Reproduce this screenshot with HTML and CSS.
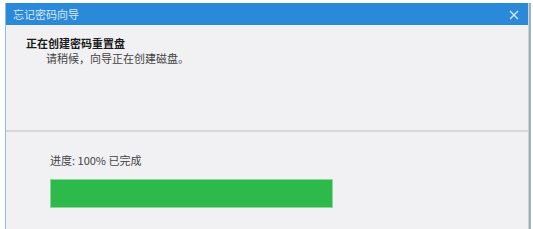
FILE: index.html
```html
<!DOCTYPE html>
<html>
    <head>
        <title>忘记密码向导</title>
        <link rel="stylesheet" href="styles.css">
    </head>
<body>
    <div class="window">
        <div class="titlebar">
            <span class="title">忘记密码向导</span>
            <svg class="close" width="10" height="10" viewBox="0 0 10 10">
                <path d="M1 1 L9 9 M9 1 L1 9" stroke="#d4e6f6" stroke-width="1.4" fill="none"/>
            </svg>
        </div>
        <div class="header">
            <div class="heading">正在创建密码重置盘</div>
            <div class="subtext">请稍候，向导正在创建磁盘。</div>
        </div>
        <div class="content">
            <div class="progress-label">进度: 100% 已完成</div>
            <div class="progress">
                <div class="progress-fill" style="width: 100%"></div>
            </div>
        </div>
    </div>
</body>
</html>
```

FILE: styles.css
```css
body {
    margin: 0;
    background-color: #fff;
    font-family: "Noto Sans CJK SC", "Noto Sans", sans-serif;
    overflow: hidden;
}

.window {
    margin: 3px 0 0 5px;
    width: 522px;
    height: 226px;
    background-color: #f1f0f3;
    border-left: 1px solid #8dbde6;
    border-right: 1px solid #b9d5ea;
    box-shadow: 2px 0 0 #a7adb3;
}

.titlebar {
    height: 22px;
    background-color: #2b89d9;
    display: flex;
    align-items: center;
    justify-content: space-between;
    padding: 0 9px 0 7px;
}

.title {
    font-size: 11px;
    color: #d9e9f8;
}

.close {
    margin-top: 1px;
}

.header {
    height: 94px;
    padding: 11px 0 0 20px;
    border-bottom: 2px solid #d7d7da;
}

.heading {
    font-size: 11px;
    line-height: 15px;
    font-weight: bold;
    color: #1a1a1a;
}

.subtext {
    font-size: 11px;
    line-height: 14px;
    color: #444;
    padding-left: 20px;
}

.content {
    padding: 21px 0 0 44px;
}

.progress-label {
    font-size: 11px;
    line-height: 15px;
    color: #444;
}

.progress {
    margin-top: 11px;
    width: 281px;
    height: 27px;
    border: 1px solid #8fd49c;
    background-color: #e6e6e6;
}

.progress-fill {
    height: 100%;
    background-color: #2dba4b;
}
```
